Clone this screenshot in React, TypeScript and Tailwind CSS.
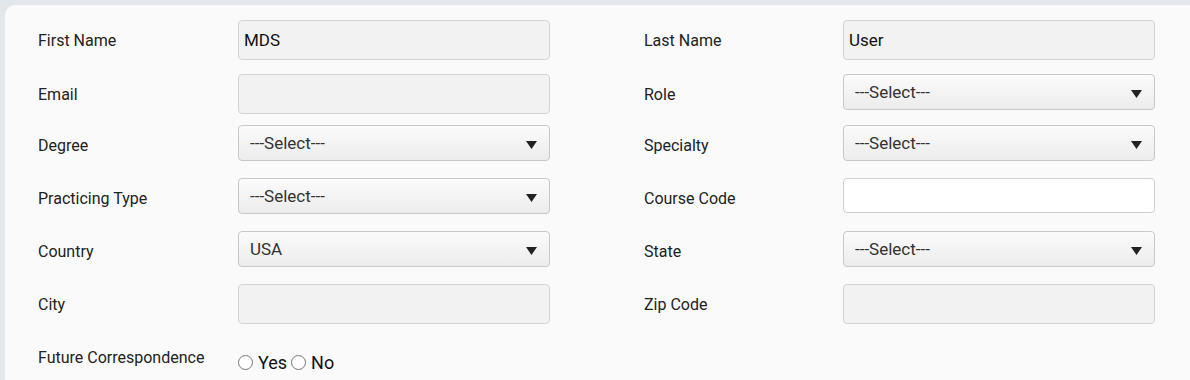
import React from 'react';

type Field =
  | { label: string; kind: 'text'; value?: string; disabled?: boolean }
  | { label: string; kind: 'select'; value: string };

const rows: { gap: string; cells: [Field, Field] }[] = [
  {
    gap: 'mt-0',
    cells: [
      { label: 'First Name', kind: 'text', value: 'MDS', disabled: true },
      { label: 'Last Name', kind: 'text', value: 'User', disabled: true },
    ],
  },
  {
    gap: 'mt-[14px]',
    cells: [
      { label: 'Email', kind: 'text', value: '', disabled: true },
      { label: 'Role', kind: 'select', value: '---Select---' },
    ],
  },
  {
    gap: 'mt-[11px]',
    cells: [
      { label: 'Degree', kind: 'select', value: '---Select---' },
      { label: 'Specialty', kind: 'select', value: '---Select---' },
    ],
  },
  {
    gap: 'mt-[13px]',
    cells: [
      { label: 'Practicing Type', kind: 'select', value: '---Select---' },
      { label: 'Course Code', kind: 'text', value: '' },
    ],
  },
  {
    gap: 'mt-[13px]',
    cells: [
      { label: 'Country', kind: 'select', value: 'USA' },
      { label: 'State', kind: 'select', value: '---Select---' },
    ],
  },
  {
    gap: 'mt-[13px]',
    cells: [
      { label: 'City', kind: 'text', value: '', disabled: true },
      { label: 'Zip Code', kind: 'text', value: '', disabled: true },
    ],
  },
];

function Control({ field }: { field: Field }) {
  if (field.kind === 'select') {
    return (
      <div className="w-[312px] h-[36px] self-start flex items-center justify-between pl-[11px] pr-[12px] pt-[1px] rounded-[4px] border border-[#c8c8c8] bg-gradient-to-b from-[#fbfbfb] to-[#ececec] text-[17px] text-[#333]">
        <span>{field.value}</span>
        <svg width="11" height="8" viewBox="0 0 11 8" className="mt-[2px]">
          <path d="M0 0 H11 L5.5 8 Z" fill="#222" />
        </svg>
      </div>
    );
  }
  if (field.disabled) {
    return (
      <div className="w-[312px] h-[40px] flex items-center px-[5px] pt-[1px] rounded-[4px] border border-[#d3d3d3] bg-[#f2f2f2] text-[17px] text-[#111]">
        {field.value}
      </div>
    );
  }
  return (
    <div className="w-[312px] h-[35px] self-start rounded-[4px] border border-[#cfcfcf] bg-white" />
  );
}

export default function App() {
  return (
    <div
      className="h-[380px] w-[1190px] overflow-hidden bg-[#e3e7ec] pl-[5px] pt-[5px]"
      style={{ fontFamily: 'Roboto, "Noto Sans", sans-serif' }}
    >
      <div className="h-full w-[1200px] rounded-tl-[10px] bg-[#fafafa] pl-[33px] pt-[15px]">
        <div className="flex flex-col">
          {rows.map(({ gap, cells: [left, right] }, i) => (
            <div key={i} className={`flex h-[40px] ${gap}`}>
              <div className="flex w-[606px]">
                <div className="w-[200px] flex items-center pt-[2px] text-[16px] text-[#222]">{left.label}</div>
                <Control field={left} />
              </div>
              <div className="flex">
                <div className="w-[199px] flex items-center pt-[2px] text-[16px] text-[#222]">{right.label}</div>
                <Control field={right} />
              </div>
            </div>
          ))}
          <div className="flex h-[40px] mt-[13px]">
            <div className="w-[200px] flex items-center pt-[2px] text-[16px] text-[#222]">Future Correspondence</div>
            <div className="flex items-center pt-[10px] text-[18px] text-[#111]">
              <label className="flex items-center">
                <input type="radio" name="fc" className="m-0 w-[15px] h-[15px]" />
                <span className="ml-[5px]">Yes</span>
              </label>
              <label className="flex items-center ml-[4px]">
                <input type="radio" name="fc" className="m-0 w-[15px] h-[15px]" />
                <span className="ml-[5px]">No</span>
              </label>
            </div>
          </div>
        </div>
      </div>
    </div>
  );
}
